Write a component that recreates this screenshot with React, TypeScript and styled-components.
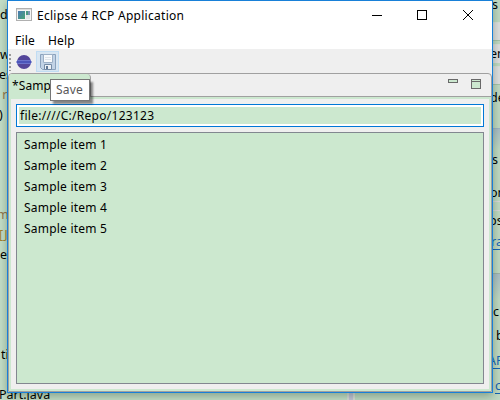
import React from "react";
import styled, { createGlobalStyle } from "styled-components";

const GlobalStyle = createGlobalStyle`
  * { box-sizing: border-box; }
  body { margin: 0; overflow: hidden; font-family: "Noto Sans", "Open Sans", sans-serif; font-size: 12.5px; color: #000; }
`;

const Desktop = styled.main`
  position: relative;
  width: 500px;
  height: 400px;
  overflow: hidden;
  background: #c6e0ca;
`;

const Backdrop = styled.div`
  display: grid;
  grid-template-columns: 347px 8px 145px;
  height: 400px;
`;

const Editor = styled.div`
  padding-top: 5px;
  overflow: hidden;
  background: #c3dec7;
`;

const CodeLine = styled.div<{ $tone?: string; $shift?: number }>`
  height: 20px;
  line-height: 20px;
  white-space: pre;
  margin-left: ${(p) => p.$shift ?? 0}px;
  color: ${(p) => p.$tone ?? "#000"};
`;

const Sash = styled.div`
  background: #c3c4d6;
  border: solid #d8dcd8;
  border-width: 0 2px;
`;

const Side = styled.div`
  display: flex;
  flex-direction: column;
  padding-left: 138px;
  background: #bfd9c2;
`;

const SideRow = styled.div<{ $h: number; $bg?: string; $link?: boolean; $shift?: number; $line?: string }>`
  flex: none;
  height: ${(p) => p.$h}px;
  line-height: ${(p) => p.$h}px;
  background: ${(p) => p.$bg ?? "transparent"};
  color: ${(p) => (p.$link ? "#1464b4" : "#000")};
  text-decoration: ${(p) => (p.$link ? "underline" : "none")};
  text-underline-offset: 3px;
  border-bottom: ${(p) => (p.$line ? `1px solid ${p.$line}` : "none")};
  text-indent: ${(p) => p.$shift ?? 0}px;
  white-space: nowrap;
`;

const Window = styled.section`
  position: absolute;
  left: 7px;
  top: 0;
  width: 486px;
  height: 393px;
  display: flex;
  flex-direction: column;
  border: 1px solid #1880d8;
  background: #efefef;
  box-shadow: 0 3px 9px rgba(0, 30, 10, 0.32);
`;

const TitleBar = styled.header`
  display: flex;
  align-items: center;
  height: 30px;
  flex: none;
  padding: 0 8px 2px 8px;
  background: #fff;
`;

const Title = styled.h1`
  flex: 1;
  margin: 0 0 0 5px;
  padding-top: 2px;
  font-size: 12px;
  font-weight: 400;
  letter-spacing: 0.28px;
  line-height: 26px;
`;

const Controls = styled.div`
  display: flex;
  gap: 33px;
  padding-right: 10px;
`;

const MenuBar = styled.nav`
  display: flex;
  gap: 13px;
  height: 18px;
  flex: none;
  padding-left: 7px;
  background: #fff;
  font-size: 12px;
  letter-spacing: 0.2px;
  line-height: 20px;
`;

const ToolBar = styled.div`
  display: flex;
  align-items: flex-start;
  height: 24px;
  flex: none;
  padding-top: 2px;
`;

const Grip = styled.svg`
  flex: none;
  width: 8px;
  height: 22px;
`;

const ToolButton = styled.span<{ $hover?: boolean }>`
  display: grid;
  place-items: center;
  width: ${(p) => (p.$hover ? 23 : 16)}px;
  height: 21px;
  margin-right: 4px;
  background: ${(p) => (p.$hover ? "#d8e6f2" : "transparent")};
  border: ${(p) => (p.$hover ? "1px solid #c0dcf3" : "none")};
`;

const PartStack = styled.div`
  display: flex;
  flex-direction: column;
  flex: 1;
  min-height: 0;
  border: 1px solid #a0a0a0;
  border-radius: 4px 4px 0 0;
  overflow: hidden;
`;

const TabRow = styled.div`
  display: flex;
  justify-content: space-between;
  height: 23px;
  flex: none;
  border-bottom: 1px solid #a0a0a0;
`;

const Tab = styled.div`
  width: 82px;
  height: 23px;
  padding-left: 3px;
  background: #cce8cf;
  border-right: 1px solid #a0a0a0;
  border-radius: 0 4px 0 0;
  font-size: 12px;
  letter-spacing: 0.1px;
  line-height: 24px;
`;

const PartControls = styled.div`
  display: flex;
  gap: 11px;
  padding: 5px 9px 0 0;
`;

const PartBody = styled.div`
  display: flex;
  flex-direction: column;
  flex: 1;
  gap: 5px;
  padding: 5px;
  border: 2px solid #cce8cf;
  background: #efefef;
`;

const PathField = styled.div`
  height: 23px;
  flex: none;
  padding: 2px;
  background: #fff;
  border: 1px solid #0078d7;
`;

const PathText = styled.div`
  height: 17px;
  padding-left: 1px;
  background: #cce8cf;
  font-size: 12px;
  letter-spacing: 0.28px;
  line-height: 17px;
`;

const List = styled.ul`
  flex: 1;
  margin: 0;
  padding: 1px 0 0 7px;
  list-style: none;
  background: #cce8cf;
  border: 1px solid #828790;
`;

const Item = styled.li`
  height: 21px;
  font-size: 12px;
  letter-spacing: 0.22px;
  line-height: 21px;
`;

const Tooltip = styled.div`
  position: absolute;
  left: 50px;
  top: 79px;
  width: 40px;
  height: 22px;
  padding-left: 5px;
  background: #fff;
  border: 1px solid #767676;
  color: #575757;
  font-size: 12px;
  letter-spacing: 0.2px;
  line-height: 20px;
  box-shadow: 3px 3px 2px rgba(0, 0, 0, 0.45);
`;

const code: { text: string; tone?: string; shift?: number }[] = [
  { text: "d" }, { text: "" }, { text: "w" }, { text: "es", shift: -1 },
  { text: " r", tone: "#94754a", shift: -1 }, { text: ")", shift: -1 },
  { text: "" }, { text: "" }, { text: "" }, { text: "" },
  { text: "m", tone: "#94754a", shift: -3 }, { text: "[J", tone: "#a58430", shift: -1 }, { text: "e" },
  { text: "" }, { text: "" }, { text: "" }, { text: "" }, { text: "ti", shift: 1 },
  { text: "" }, { text: "Part.java", shift: -1 },
];

const AppIcon = () => (
  <svg width="16" height="14" viewBox="0 0 16 14" shapeRendering="crispEdges">
    <defs>
      <linearGradient id="pane" x2="1" y2="1">
        <stop stopColor="#4b79b5" />
        <stop offset="1" stopColor="#48a574" />
      </linearGradient>
    </defs>
    <rect x=".5" y=".5" width="15" height="12" fill="#f5f5f5" stroke="#b0b0b0" />
    <path d="M1 1h14v1H1z" fill="#ddd" />
    <rect x="2" y="3" width="7" height="8" fill="url(#pane)" />
    <rect x="10" y="3" width="2" height="4" fill="#4b9b82" />
    <rect x="12" y="3" width="2" height="4" fill="#7a96b4" />
    <rect x="10" y="7" width="4" height="4" fill="#e2e5e6" />
  </svg>
);

const EclipseIcon = () => (
  <svg width="16" height="16" viewBox="0 0 16 16">
    <circle cx="8" cy="8" r="7" fill="#54469a" />
    <path d="M1 6.5h14M1 9.5h14" stroke="#6c74cc" />
    <path d="M.5 8h15" stroke="#4c55ba" strokeWidth="2" />
  </svg>
);

const SaveIcon = () => (
  <svg width="16" height="16" viewBox="0 0 16 16">
    <path d="M.5.5h15v15h-13l-2-2z" fill="#c2d3e6" stroke="#8ba2bd" />
    <path d="M3.5.5h9v8h-9z" fill="#f8fafc" stroke="#9db0c6" />
    <path d="M5 3.5h6M5 5.5h6" stroke="#dde3e9" />
    <path d="M4.5 10.5h7v5h-7z" fill="#edf1f5" stroke="#748ba6" />
    <path d="M6 12h2v3H6z" fill="#617998" />
  </svg>
);

export default function App() {
  return (
    <Desktop>
      <GlobalStyle />
      <Backdrop>
        <Editor>
          {code.map((l, i) => (
            <CodeLine key={i} $tone={l.tone} $shift={l.shift}>{l.text}</CodeLine>
          ))}
        </Editor>
        <Sash />
        <Side>
          <SideRow $h={10} $shift={-1}>s</SideRow>
          <SideRow $h={13} $line="#d8e0d8" />
          <SideRow $h={18} $bg="#dedfdf" $line="#a5c2a9" />
          <SideRow $h={4} $line="#d8e0d8" />
          <SideRow $h={18} $bg="#dedfdf" $shift={-3}>en</SideRow>
          <SideRow $h={4} $line="#d8e0d8" />
          <SideRow $h={18} $bg="#dedfdf" $line="#a5c2a9" />
          <SideRow $h={26} $shift={-3}>de</SideRow>
          <SideRow $h={18} $line="#9db3c3" />
          <SideRow $h={21} $bg="linear-gradient(#a9bdc5, #bfd9c2)" />
          <SideRow $h={20} $shift={-1}>s</SideRow>
          <SideRow $h={14} />
          <SideRow $h={18} $shift={-3} $line="#d8d8d8">on</SideRow>
          <SideRow $h={9} $line="#d8d8d8" />
          <SideRow $h={20} $shift={-4}>ps</SideRow>
          <SideRow $h={22} $link $shift={-2}>ra</SideRow>
          <SideRow $h={21} $line="#9db3a9" />
          <SideRow $h={26} $bg="linear-gradient(#a9bdc5, #bfd9c2)" />
          <SideRow $h={24}>c</SideRow>
          <SideRow $h={24} $shift={3}>b</SideRow>
          <SideRow $h={25} $link $shift={-5}>AP</SideRow>
          <SideRow $h={26} $link $shift={2}>c</SideRow>
        </Side>
      </Backdrop>
      <Window>
        <TitleBar>
          <AppIcon />
          <Title>Eclipse 4 RCP Application</Title>
          <Controls>
            <svg width="12" height="12" shapeRendering="crispEdges"><path d="M1 6.5h10" stroke="#000" /></svg>
            <svg width="12" height="12" shapeRendering="crispEdges"><rect x="1.5" y="1.5" width="9" height="9" fill="none" stroke="#000" /></svg>
            <svg width="13" height="12"><path d="M2 1l10 10M12 1L2 11" stroke="#000" /></svg>
          </Controls>
        </TitleBar>
        <MenuBar>
          <span>File</span>
          <span>Help</span>
        </MenuBar>
        <ToolBar>
          <Grip viewBox="0 0 8 22" shapeRendering="crispEdges">
            <path d="M2 3v17" stroke="#999" strokeWidth="2" strokeDasharray="2 2" />
          </Grip>
          <ToolButton><EclipseIcon /></ToolButton>
          <ToolButton $hover><SaveIcon /></ToolButton>
        </ToolBar>
        <PartStack>
          <TabRow>
            <Tab>*Samp</Tab>
            <PartControls>
              <svg width="12" height="12" shapeRendering="crispEdges"><rect x="1.5" y=".5" width="9" height="3" fill="#cce8cf" stroke="#696969" /></svg>
              <svg width="12" height="12" shapeRendering="crispEdges"><path d="M1.5.5h9v9h-9zM1.5 2.5h9" fill="#cce8cf" stroke="#696969" /></svg>
            </PartControls>
          </TabRow>
          <PartBody>
            <PathField><PathText>file:////C:/Repo/123123</PathText></PathField>
            <List>
              {[1, 2, 3, 4, 5].map((n) => <Item key={n}>Sample item {n}</Item>)}
            </List>
          </PartBody>
        </PartStack>
      </Window>
      <Tooltip>Save</Tooltip>
    </Desktop>
  );
}
